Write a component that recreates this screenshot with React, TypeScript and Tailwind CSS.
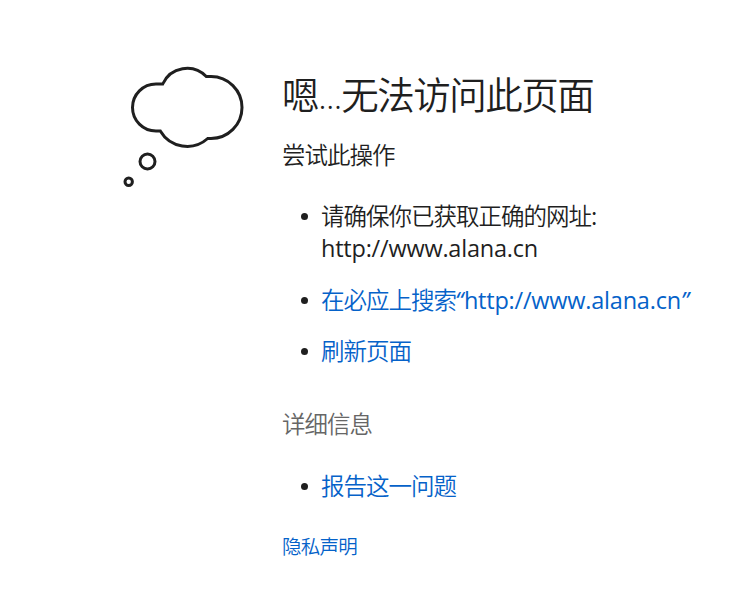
import type { ReactNode } from "react";

function ThoughtCloud() {
  return (
    <svg width="122" height="124" viewBox="122 65 122 124" fill="none" stroke="#1f1f1f" strokeWidth="3" className="block shrink-0">
      <path d="M162.7 84A26.7 26.7 0 0 1 206.3 76.5H211A31 31 0 0 1 211 138.5H207.7A31 31 0 0 1 160.3 131H156A23.5 23.5 0 0 1 156 84Z" />
      <circle cx="147.5" cy="161.5" r="7.5" />
      <circle cx="128.7" cy="181.7" r="3.7" />
    </svg>
  );
}

function Item({ children }: { children: ReactNode }) {
  return (
    <li className="flex">
      <span className="mt-[14px] mr-[13px] ml-[19px] size-[7px] shrink-0 rounded-full bg-[#1f1f1f]" />
      <div>{children}</div>
    </li>
  );
}

const cjk = "font-['Noto_Sans_CJK_SC','Noto_Sans_CJK_SC_DemiLight',sans-serif] font-[350]";
const body = "text-[23.5px] tracking-[-1px] whitespace-nowrap";
const latin = "font-['Open_Sans','Noto_Sans',sans-serif] font-[370] text-[23.5px] tracking-[-0.22px]";

export default function App() {
  return (
    <main className={`flex h-[616px] w-[749px] overflow-hidden bg-white pt-[65px] pl-[122px] text-[#1f1f1f] ${cjk}`}>
      <ThoughtCloud />
      <div className="ml-[38px] flex flex-col items-start whitespace-nowrap">
        <h1 className="-mt-[2px] h-[60px] text-[37.5px] leading-[60px] tracking-[-1.5px]">嗯<span className="font-['Open_Sans',sans-serif] tracking-[-1.15px]">...</span>无法访问此页面</h1>
        <h2 className={`mt-[15px] h-8 leading-8 ${body}`}>尝试此操作</h2>
        <ul className={`mt-[29px] flex flex-col gap-[19px] leading-8 ${body}`}>
          <Item>
            <p className="h-8">请确保你已获取正确的网址:</p>
            <p className={`mt-px h-8 ${latin}`}>http://www.alana.cn</p>
          </Item>
          <Item>
            <a href="#" className="block h-8 text-[#0562c9]">在必应上搜索<span className={latin}><i className="mr-px -ml-px">“</i>http://www.alana.cn<i>”</i></span></a>
          </Item>
          <Item>
            <a href="#" className="block h-8 text-[#0562c9]">刷新页面</a>
          </Item>
        </ul>
        <h2 className={`mt-[41px] h-8 leading-8 text-[#666666] ${body}`}>详细信息</h2>
        <ul className={`mt-[30px] leading-8 ${body}`}>
          <Item>
            <a href="#" className="block h-8 text-[#0562c9]">报告这一问题</a>
          </Item>
        </ul>
        <a href="#" className="mt-[31px] h-7 text-[19.5px] leading-7 tracking-[-0.75px] text-[#0562c9]">隐私声明</a>
      </div>
    </main>
  );
}
